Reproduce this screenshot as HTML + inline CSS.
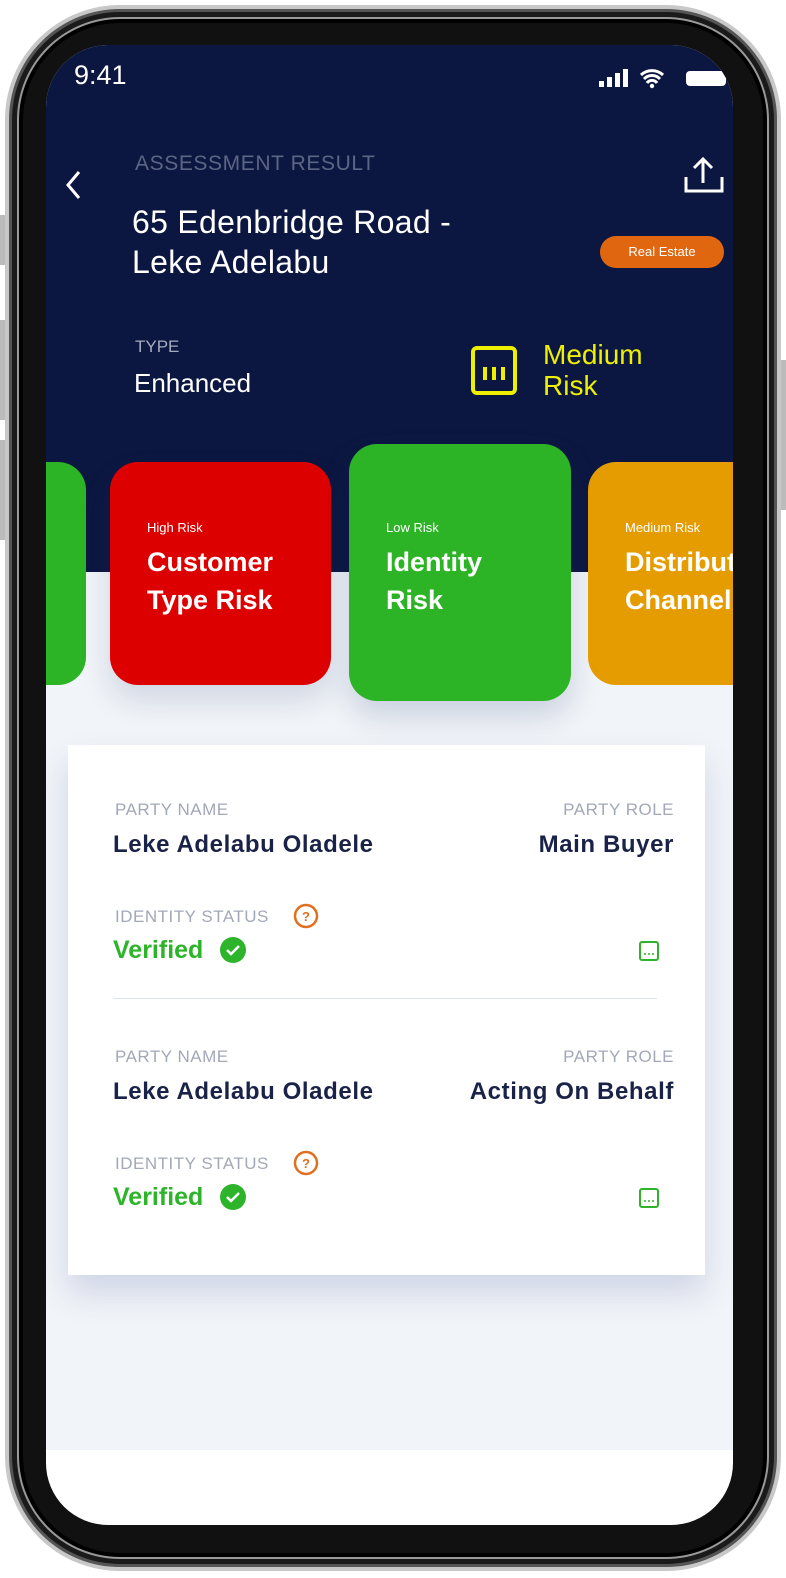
<!DOCTYPE html>
<html><head><meta charset="utf-8">
<style>
*{margin:0;padding:0;box-sizing:border-box}
body{width:786px;height:1578px;background:#fff;position:relative;overflow:hidden;font-family:"Liberation Sans",sans-serif}
.frame{position:absolute;left:5px;top:5px;width:776px;height:1566px;border-radius:115px;background:#111;border:4px solid #c8c8c8;box-shadow:inset 0 0 0 3px #555,inset 0 0 0 8px #1a1a1a,inset 0 0 0 10px #999,inset 0 0 0 14px #000}
.btn{position:absolute;background:#bbb;width:5px}
.screen{position:absolute;left:46px;top:45px;width:687px;height:1480px;border-radius:62px;overflow:hidden;background:#fff}
.navy{position:absolute;left:0;top:0;width:100%;height:527px;background:#0c1741}
.light{position:absolute;left:0;top:527px;width:100%;height:878px;background:#f1f4f8}
.abs{position:absolute}
.w{color:#fff}
.card{position:absolute;border-radius:28px;color:#fff;padding:0 37px}
.card .s{font-size:13px;margin-top:58px}
.card .t{font-size:27px;font-weight:bold;line-height:38px;margin-top:8px}
.lab{font-size:17px;color:#a3a8b8;letter-spacing:.5px}
.val{font-size:24px;color:#1a2248;font-weight:bold;letter-spacing:.6px}
.ver{font-size:25px;color:#2db42a;font-weight:bold}
</style></head><body>
<div class="btn" style="left:0;top:215px;height:50px"></div>
<div class="btn" style="left:0;top:320px;height:100px"></div>
<div class="btn" style="left:0;top:440px;height:100px"></div>
<div class="btn" style="left:781px;top:360px;height:150px"></div>
<div class="frame"></div>
<div class="screen">
 <div class="navy"></div>
 <div class="light"></div>
 <div class="abs w" style="left:28px;top:15px;font-size:27px">9:41</div>
 <svg class="abs" style="left:553px;top:22px" width="130" height="24" viewBox="0 0 130 24">
  <rect x="0" y="14" width="5" height="6" fill="#fff"/><rect x="8" y="10" width="5" height="10" fill="#fff"/><rect x="16" y="6" width="5" height="14" fill="#fff"/><rect x="24" y="2" width="5" height="18" fill="#fff"/>
  <path d="M42 8a16 16 0 0 1 22 0M45 12a11 11 0 0 1 16 0M48 16a6 6 0 0 1 10 0" stroke="#fff" stroke-width="3" fill="none"/><circle cx="53" cy="19" r="2.2" fill="#fff"/>
  <rect x="87" y="4" width="40" height="15" rx="4" fill="#fff"/>
 </svg>
 <svg class="abs" style="left:18px;top:124px" width="20" height="32"><path d="M15 3L4 16l11 13" stroke="#fff" stroke-width="3" fill="none"/></svg>
 <svg class="abs" style="left:637px;top:110px" width="44" height="40"><path d="M20 4v24M11 13l9-9 9 9M3 22v14h36V22" stroke="#fff" stroke-width="3" fill="none"/></svg>
 <div class="abs" style="left:89px;top:107px;font-size:21px;color:#5d6585;letter-spacing:.6px">ASSESSMENT RESULT</div>
 <div class="abs w" style="left:86px;top:157px;font-size:32px;line-height:40px;letter-spacing:.3px">65 Edenbridge Road -<br>Leke Adelabu</div>
 <div class="abs" style="left:554px;top:191px;width:124px;height:32px;border-radius:16px;background:#e06610;color:#fff;font-size:13px;text-align:center;line-height:32px">Real Estate</div>
 <div class="abs" style="left:89px;top:292px;font-size:17px;color:#a6abc0">TYPE</div>
 <div class="abs w" style="left:88px;top:323px;font-size:26px">Enhanced</div>
 <svg class="abs" style="left:424px;top:300px" width="50" height="52"><rect x="3" y="3" width="42" height="45" rx="4" stroke="#eef000" stroke-width="4" fill="none"/><path d="M15 22v13M24 22v13M33 22v13" stroke="#eef000" stroke-width="4"/></svg>
 <div class="abs" style="left:497px;top:294px;font-size:28px;line-height:31px;color:#eef000">Medium<br>Risk</div>
 <div class="card" style="left:-80px;top:417px;width:120px;height:223px;background:#2db426"></div>
 <div class="card" style="left:64px;top:417px;width:221px;height:223px;background:#dd0000;box-shadow:0 15px 30px rgba(30,50,110,.15)"><div class="s">High Risk</div><div class="t">Customer<br>Type Risk</div></div>
 <div class="card" style="left:303px;top:399px;width:222px;height:257px;background:#2db426;box-shadow:0 15px 30px rgba(30,50,110,.18)"><div class="s" style="margin-top:76px">Low Risk</div><div class="t">Identity<br>Risk</div></div>
 <div class="card" style="left:542px;top:417px;width:221px;height:223px;background:#e59c00;white-space:nowrap"><div class="s">Medium Risk</div><div class="t">Distribution<br>Channel</div></div>
 <div class="abs" style="left:22px;top:700px;width:637px;height:530px;background:#fff;box-shadow:0 18px 30px rgba(60,80,150,.18)">
  <div class="abs lab" style="left:47px;top:55px">PARTY NAME</div>
  <div class="abs lab" style="right:31px;top:55px">PARTY ROLE</div>
  <div class="abs val" style="left:45px;top:86px">Leke Adelabu Oladele</div>
  <div class="abs val" style="right:31px;top:86px">Main Buyer</div>
  <div class="abs lab" style="left:47px;top:162px">IDENTITY STATUS</div>
  <svg class="abs" style="left:224px;top:157px" width="28" height="28"><circle cx="14" cy="14" r="11" stroke="#e07020" stroke-width="2.5" fill="none"/><text x="14" y="19" font-size="13" font-weight="bold" fill="#e07020" text-anchor="middle" font-family="Liberation Sans">?</text></svg>
  <div class="abs ver" style="left:45px;top:191px">Verified</div>
  <svg class="abs" style="left:151px;top:191px" width="28" height="28"><circle cx="14" cy="14" r="13" fill="#2db42a"/><path d="M8 14l4 4 8-8" stroke="#fff" stroke-width="2.5" fill="none"/></svg>
  <svg class="abs" style="left:570px;top:195px" width="22" height="22"><rect x="2" y="2" width="18" height="18" rx="2" stroke="#2db42a" stroke-width="2" fill="none"/><path d="M7 15v-2M11 15v-2M15 15v-2" stroke="#2db42a" stroke-width="1.5"/></svg>
  <div class="abs" style="left:45px;top:253px;width:544px;height:1px;background:#dfe3ef"></div>
  <div class="abs lab" style="left:47px;top:302px">PARTY NAME</div>
  <div class="abs lab" style="right:31px;top:302px">PARTY ROLE</div>
  <div class="abs val" style="left:45px;top:333px">Leke Adelabu Oladele</div>
  <div class="abs val" style="right:31px;top:333px">Acting On Behalf</div>
  <div class="abs lab" style="left:47px;top:409px">IDENTITY STATUS</div>
  <svg class="abs" style="left:224px;top:404px" width="28" height="28"><circle cx="14" cy="14" r="11" stroke="#e07020" stroke-width="2.5" fill="none"/><text x="14" y="19" font-size="13" font-weight="bold" fill="#e07020" text-anchor="middle" font-family="Liberation Sans">?</text></svg>
  <div class="abs ver" style="left:45px;top:438px">Verified</div>
  <svg class="abs" style="left:151px;top:438px" width="28" height="28"><circle cx="14" cy="14" r="13" fill="#2db42a"/><path d="M8 14l4 4 8-8" stroke="#fff" stroke-width="2.5" fill="none"/></svg>
  <svg class="abs" style="left:570px;top:442px" width="22" height="22"><rect x="2" y="2" width="18" height="18" rx="2" stroke="#2db42a" stroke-width="2" fill="none"/><path d="M7 15v-2M11 15v-2M15 15v-2" stroke="#2db42a" stroke-width="1.5"/></svg>
 </div>
</div>
</body></html>
